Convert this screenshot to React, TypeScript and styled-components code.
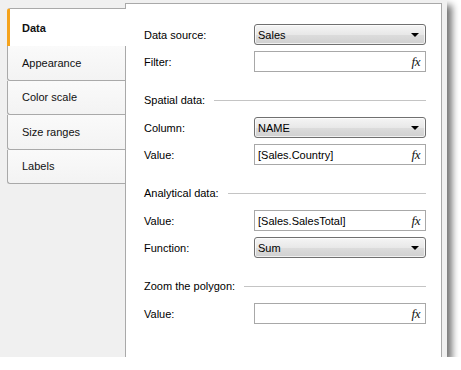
import { FC } from "react";
import styled, { createGlobalStyle } from "styled-components";

const GlobalStyle = createGlobalStyle`
  body {
    margin: 0;
    background: #ffffff;
    font-family: "Liberation Sans", Arial, sans-serif;
    font-size: 11px;
    color: #000;
  }
`;

const TABS = ["Data", "Appearance", "Color scale", "Size ranges", "Labels"];

type Row =
  | { kind: "select"; label: string; value: string }
  | { kind: "expr"; label: string; value: string };

type Section = { title?: string; rows: Row[] };

const SECTIONS: Section[] = [
  {
    rows: [
      { kind: "select", label: "Data source:", value: "Sales" },
      { kind: "expr", label: "Filter:", value: "" },
    ],
  },
  {
    title: "Spatial data:",
    rows: [
      { kind: "select", label: "Column:", value: "NAME" },
      { kind: "expr", label: "Value:", value: "[Sales.Country]" },
    ],
  },
  {
    title: "Analytical data:",
    rows: [
      { kind: "expr", label: "Value:", value: "[Sales.SalesTotal]" },
      { kind: "select", label: "Function:", value: "Sum" },
    ],
  },
  {
    title: "Zoom the polygon:",
    rows: [{ kind: "expr", label: "Value:", value: "" }],
  },
];

const App: FC = () => (
  <>
    <GlobalStyle />
    <Window>
      <TabColumn>
        {TABS.map((tab, i) => (
          <Tab key={tab} $active={i === 0}>
            {tab}
          </Tab>
        ))}
      </TabColumn>
      <Panel>
        {SECTIONS.map((section, si) => (
          <Group key={si}>
            {section.title && (
              <SectionTitle>
                <span>{section.title}</span>
                <Rule />
              </SectionTitle>
            )}
            {section.rows.map((row, ri) => (
              <FormRow key={ri}>
                <Label>{row.label}</Label>
                {row.kind === "select" ? (
                  <Select>
                    <span>{row.value}</span>
                    <Arrow />
                  </Select>
                ) : (
                  <ExprInput>
                    <span>{row.value}</span>
                    <Fx>fx</Fx>
                  </ExprInput>
                )}
              </FormRow>
            ))}
          </Group>
        ))}
      </Panel>
    </Window>
  </>
);

const Window = styled.div`
  width: 447px;
  height: 357px;
  box-sizing: border-box;
  background: #f0f0f0;
  display: flex;
  padding: 3px 5px 0 7px;
  box-shadow: 5px 5px 7px rgba(0, 0, 0, 0.55);
`;

const TabColumn = styled.div`
  width: 118px;
  flex-shrink: 0;
  padding-top: 5px;
  display: flex;
  flex-direction: column;
  position: relative;
  z-index: 1;
`;

const Tab = styled.div<{ $active: boolean }>`
  box-sizing: border-box;
  height: ${(p) => (p.$active ? "38px" : "34.5px")};
  width: ${(p) => (p.$active ? "119px" : "118px")};
  display: flex;
  align-items: center;
  padding-left: ${(p) => (p.$active ? "12px" : "14px")};
  border: 1px solid #a9a9a9;
  border-right: none;
  border-left: ${(p) => (p.$active ? "3px solid #f5a31c" : "1px solid #a9a9a9")};
  border-bottom: ${(p) => (p.$active ? "none" : "1px solid #a9a9a9")};
  border-radius: ${(p) => (p.$active ? "3px 0 0 0" : "0 0 0 3px")};
  background: ${(p) =>
    p.$active ? "#ffffff" : "linear-gradient(#fafafa, #f3f3f3)"};
  font-weight: ${(p) => (p.$active ? "bold" : "normal")};
  color: #111;
  & + & {
    border-top: none;
  }
`;

const Panel = styled.div`
  flex: 1;
  box-sizing: border-box;
  background: #ffffff;
  border: 1px solid #a9a9a9;
  border-bottom: none;
  padding: 20px 15px 0 18px;
  display: flex;
  flex-direction: column;
  gap: 6px;
`;

const Group = styled.div`
  display: flex;
  flex-direction: column;
  gap: 6px;
`;

const SectionTitle = styled.div`
  height: 14px;
  margin: 15px 0 4px;
  display: flex;
  align-items: center;
  gap: 9px;
  white-space: nowrap;
`;

const Rule = styled.div`
  flex: 1;
  height: 1px;
  background: #c4c4c4;
`;

const FormRow = styled.div`
  height: 21px;
  display: grid;
  grid-template-columns: 110px 172px;
  align-items: center;
`;

const Label = styled.span``;

const Select = styled.div`
  height: 21px;
  box-sizing: border-box;
  border: 1px solid #707070;
  border-radius: 3px;
  background: linear-gradient(#f5f5f5, #e8e8e8 50%, #dcdcdc 52%, #d0d0d0);
  box-shadow: inset 0 0 0 1px rgba(255, 255, 255, 0.7);
  display: flex;
  align-items: center;
  justify-content: space-between;
  padding: 0 6px 0 3px;
`;

const Arrow = styled.span`
  width: 0;
  height: 0;
  border-left: 4px solid transparent;
  border-right: 4px solid transparent;
  border-top: 4px solid #000;
`;

const ExprInput = styled.div`
  height: 21px;
  box-sizing: border-box;
  border: 1px solid #a8a8a8;
  background: #ffffff;
  display: flex;
  align-items: center;
  justify-content: space-between;
  padding: 0 5px 0 3px;
`;

const Fx = styled.span`
  font-family: "Liberation Serif", "Times New Roman", serif;
  font-style: italic;
  font-size: 13px;
  letter-spacing: -0.5px;
  color: #111;
`;

export default App;
